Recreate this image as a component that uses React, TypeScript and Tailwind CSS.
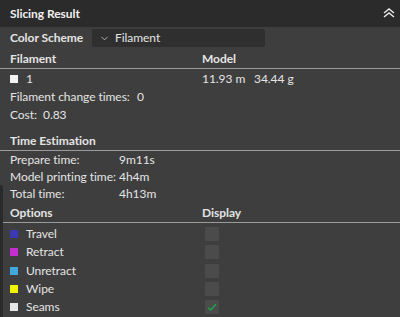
import { ChevronDown } from 'lucide-react'

const options = [
  { name: 'Travel', color: 'bg-[#3a3ab4]', checked: false },
  { name: 'Retract', color: 'bg-[#c42ed0]', checked: false },
  { name: 'Unretract', color: 'bg-[#3fa8dc]', checked: false },
  { name: 'Wipe', color: 'bg-[#f4f400]', checked: false },
  { name: 'Seams', color: 'bg-[#e6e6e6]', checked: true },
]

const times = [
  { label: 'Prepare time:', value: '9m11s' },
  { label: 'Model printing time:', value: '4h4m' },
  { label: 'Total time:', value: '4h13m' },
]

function SectionHead({ left, right }: { left: string; right?: string }) {
  return (
    <div className="flex h-[20px] items-center border-b border-[#9b9b9b] font-bold">
      <span className="w-[202px] shrink-0 pl-[10px]">{left}</span>
      {right && <span>{right}</span>}
    </div>
  )
}

function CheckBox({ checked }: { checked: boolean }) {
  return (
    <div className="flex h-[14px] w-[14px] items-center justify-center rounded-[1px] bg-[#4b4b4b]">
      {checked && (
        <svg width="10" height="8" viewBox="0 0 10 8">
          <path d="M1 4.5 L3.8 7 L9 1" fill="none" stroke="#1fa04a" strokeWidth="1.6" />
        </svg>
      )}
    </div>
  )
}

export default function App() {
  return (
    <div className="w-[400px] h-[317px] overflow-hidden whitespace-nowrap bg-[#3e3e3e] text-[12px] tracking-[-0.05px] leading-none text-[#e4e4e4] font-['Lato',sans-serif]">
      {/* Header */}
      <div className="flex h-[27px] items-center justify-between bg-[#2b2b2b] pl-[10px] pr-[4px]">
        <span className="font-bold text-[#f0f0f0]">Slicing Result</span>
        <svg width="14" height="12" viewBox="0 0 14 12" className="mt-[-2px]">
          <path d="M2 6 L7 2 L12 6 M2 10 L7 6 L12 10" fill="none" stroke="#e6e6e6" strokeWidth="1.5" />
        </svg>
      </div>

      <div className="relative">
        <div className="absolute left-0 top-[158px] h-[140px] w-[3px] rounded-r-[2px] bg-[#2a2a2a]" />

        {/* Color scheme */}
        <div className="flex h-[22px] items-center">
          <span className="w-[92px] shrink-0 pl-[10px] font-bold">Color Scheme</span>
          <div className="flex h-[18px] w-[173px] items-center rounded-[2px] bg-[#2f2f2f] pl-[7px]">
            <ChevronDown size={11} strokeWidth={1.6} className="text-[#dcdcdc]" />
            <span className="ml-[5px]">Filament</span>
          </div>
        </div>

        <SectionHead left="Filament" right="Model" />
        <div className="flex h-[19px] items-center">
          <div className="flex w-[202px] shrink-0 items-center pl-[10px]">
            <div className="h-[8px] w-[8px] bg-[#f2f2f2]" />
            <span className="ml-[8px]">1</span>
          </div>
          <span className="w-[52px] shrink-0">11.93 m</span>
          <span>34.44 g</span>
        </div>
        <div className="flex h-[18px] items-center">
          <span className="w-[137px] shrink-0 pl-[10px]">Filament change times:</span>
          <span>0</span>
        </div>
        <div className="flex h-[17px] items-center">
          <span className="w-[43px] shrink-0 pl-[10px]">Cost:</span>
          <span>0.83</span>
        </div>

        <div className="h-[8px]" />
        <SectionHead left="Time Estimation" />
        {times.map((t) => (
          <div key={t.label} className="flex h-[17px] items-center">
            <span className="w-[119px] shrink-0 pl-[10px]">{t.label}</span>
            <span>{t.value}</span>
          </div>
        ))}

        <div className="h-[1px]" />
        <SectionHead left="Options" right="Display" />
        <div className="h-[2px]" />
        {options.map((o) => (
          <div key={o.name} className="flex h-[18.3px] items-center">
            <div className="flex w-[205px] shrink-0 items-center pl-[10px]">
              <div className={`h-[8px] w-[8px] ${o.color}`} />
              <span className="ml-[8px]">{o.name}</span>
            </div>
            <CheckBox checked={o.checked} />
          </div>
        ))}
      </div>
    </div>
  )
}
